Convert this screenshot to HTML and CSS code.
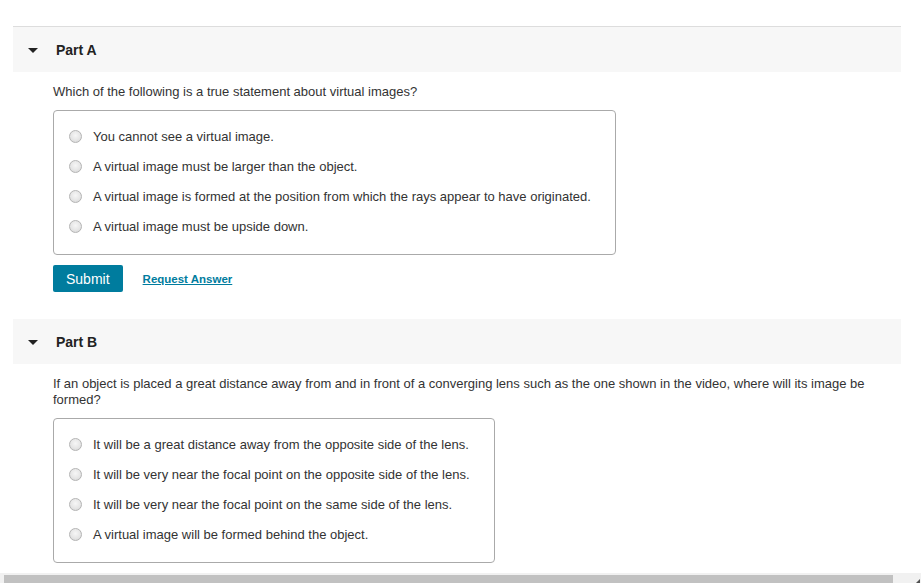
FILE: index.html
```html
<!DOCTYPE html>
<html>
<head>
<meta charset="utf-8">
<link rel="stylesheet" href="styles.css">
</head>
<body>
<div class="page">
  <section class="part first">
    <div class="part-head">
      <span class="caret"></span>
      <span class="part-title">Part A</span>
    </div>
    <div class="part-body">
      <p class="question">Which of the following is a true statement about virtual images?</p>
      <div class="choices">
        <label class="choice"><span class="radio"></span><span>You cannot see a virtual image.</span></label>
        <label class="choice"><span class="radio"></span><span>A virtual image must be larger than the object.</span></label>
        <label class="choice"><span class="radio"></span><span>A virtual image is formed at the position from which the rays appear to have originated.</span></label>
        <label class="choice"><span class="radio"></span><span>A virtual image must be upside down.</span></label>
      </div>
      <div class="actions">
        <button class="submit">Submit</button>
        <a class="request" href="#">Request Answer</a>
      </div>
    </div>
  </section>
  <section class="part">
    <div class="part-head">
      <span class="caret"></span>
      <span class="part-title">Part B</span>
    </div>
    <div class="part-body">
      <p class="question">If an object is placed a great distance away from and in front of a converging lens such as the one shown in the video, where will its image be formed?</p>
      <div class="choices">
        <label class="choice"><span class="radio"></span><span>It will be a great distance away from the opposite side of the lens.</span></label>
        <label class="choice"><span class="radio"></span><span>It will be very near the focal point on the opposite side of the lens.</span></label>
        <label class="choice"><span class="radio"></span><span>It will be very near the focal point on the same side of the lens.</span></label>
        <label class="choice"><span class="radio"></span><span>A virtual image will be formed behind the object.</span></label>
      </div>
      <div class="actions">
        <button class="submit">Submit</button>
        <a class="request" href="#">Request Answer</a>
      </div>
    </div>
  </section>
</div>
<div class="hscroll">
  <div class="hscroll-thumb"></div>
  <div class="hscroll-arrow"></div>
</div>
</body>
</html>
```
FILE: styles.css
```css
html, body {
  margin: 0;
  padding: 0;
  overflow: hidden;
  background: #fff;
}
body {
  font-family: "Liberation Sans", Arial, sans-serif;
  color: #333;
  font-size: 13px;
}
.page {
  padding: 26px 20px 0 13px;
}
.part.first .part-head {
  border-top: 1px solid #ddd;
}
.part + .part {
  margin-top: 27px;
}
.part-head {
  height: 45px;
  background: #f7f7f7;
  display: flex;
  align-items: center;
  padding-left: 15px;
}
.caret {
  width: 0;
  height: 0;
  border-left: 5px solid transparent;
  border-right: 5px solid transparent;
  border-top: 5px solid #222;
  margin-right: 18px;
  margin-top: 1px;
}
.part-title {
  font-weight: bold;
  font-size: 14px;
  color: #222;
}
.part-body {
  padding: 0 20px 0 40px;
}
.question {
  margin: 12px 0 10px 0;
  line-height: 16px;
  font-size: 13px;
  color: #333;
}
.choices {
  display: inline-flex;
  flex-direction: column;
  border: 1px solid #aaa;
  border-radius: 4px;
  padding: 10px 24px 13px 15px;
}
.choice {
  display: flex;
  align-items: center;
  height: 30px;
  font-size: 13px;
  color: #333;
}
.radio {
  width: 11px;
  height: 11px;
  border: 1px solid #b4b4b4;
  border-radius: 50%;
  background: radial-gradient(circle at 50% 40%, #f6f6f6 0%, #e6e6e6 55%, #d2d2d2 100%);
  margin-right: 11px;
  flex: none;
}
.actions {
  display: flex;
  align-items: center;
  margin-top: 10px;
}
.submit {
  height: 27px;
  padding: 0 13px;
  border: none;
  border-radius: 2px;
  background: #007c9e;
  color: #fff;
  font-family: "Liberation Sans", Arial, sans-serif;
  font-size: 14px;
  margin-right: 20px;
}
.request {
  color: #007c9e;
  font-weight: bold;
  font-size: 11.5px;
  text-decoration: underline;
}
.hscroll {
  position: fixed;
  left: 0;
  right: 0;
  bottom: 0;
  height: 10px;
  background: #f1f1f1;
}
.hscroll-thumb {
  position: absolute;
  left: 4px;
  top: 2px;
  bottom: 0;
  width: 889px;
  background: #c1c1c1;
}
.hscroll-arrow {
  position: absolute;
  right: 1px;
  bottom: 0;
  width: 0;
  height: 0;
  border-left: 4px solid transparent;
  border-bottom: 4px solid #505050;
}
```
